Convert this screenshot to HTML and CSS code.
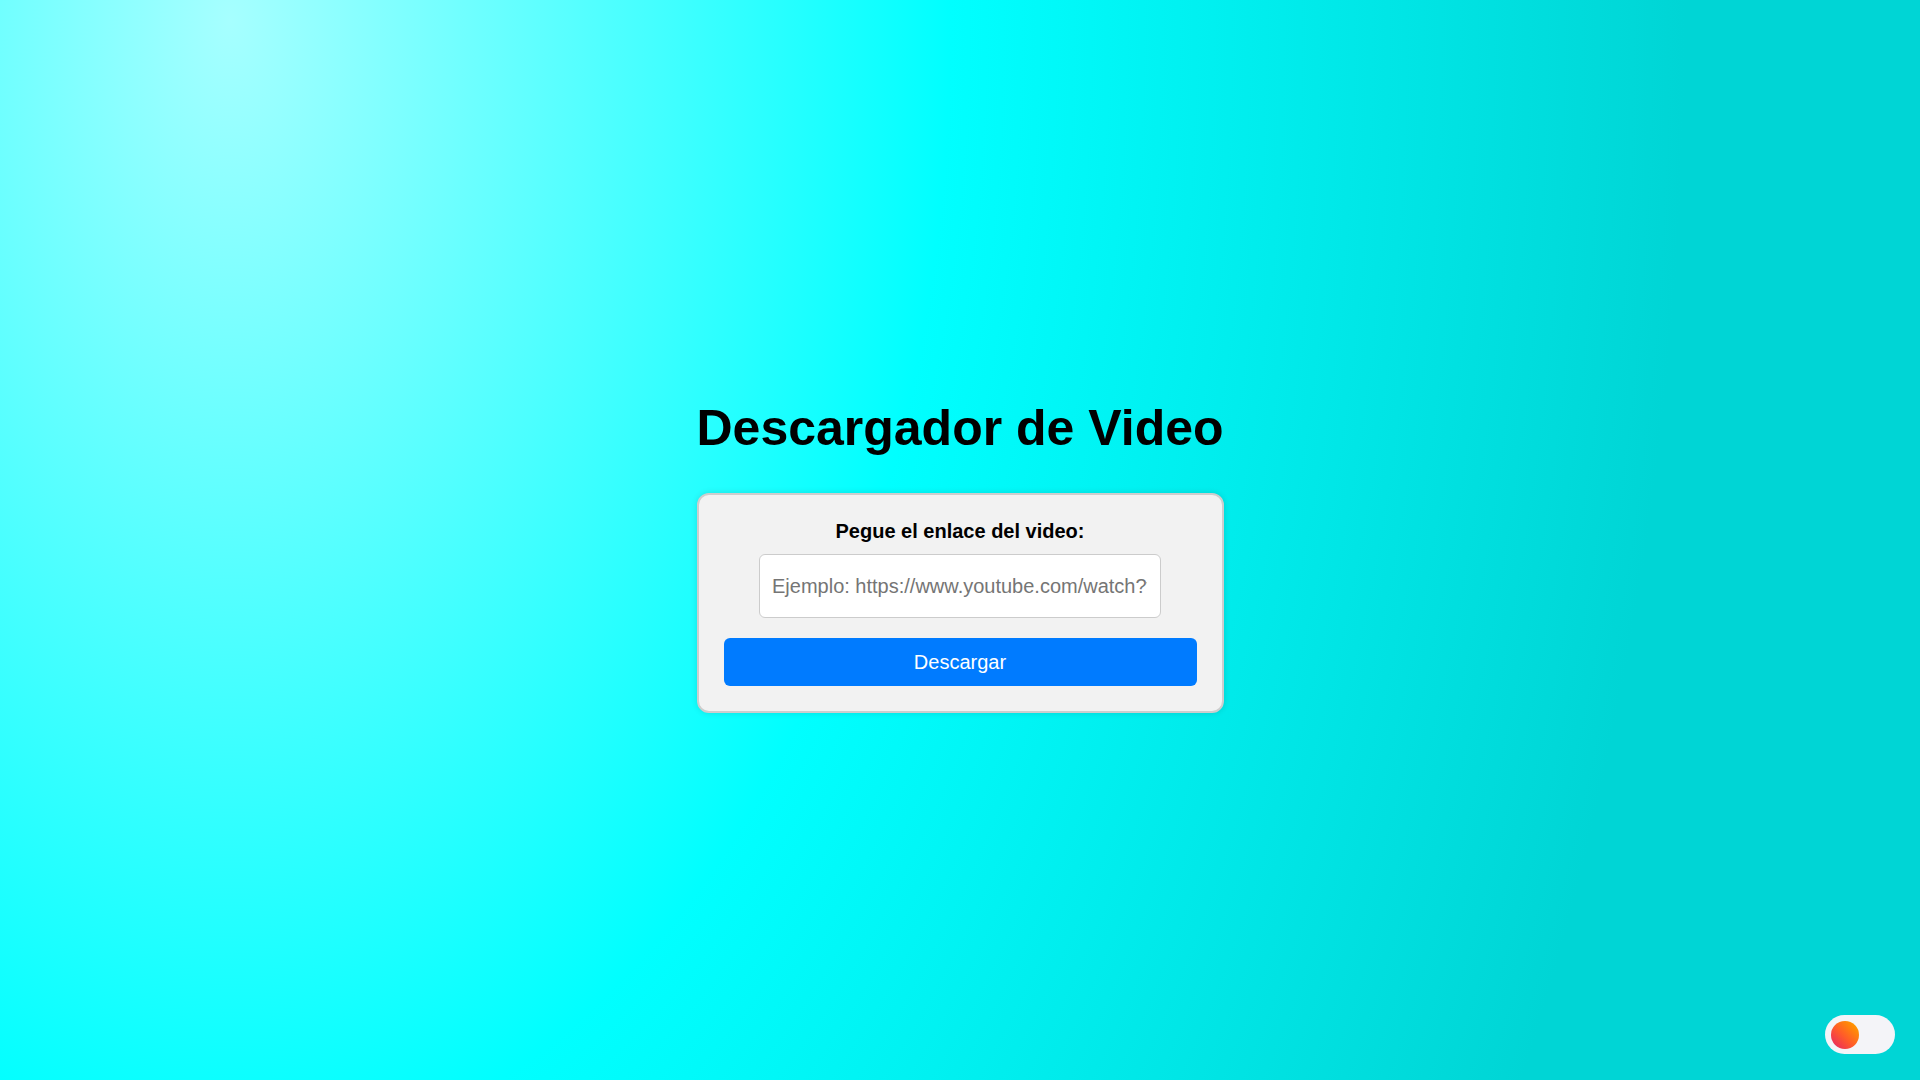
FILE: index.html
```html
<!DOCTYPE html>
<html lang="es">
<head>
<meta charset="utf-8">
<title>Descargador de Video</title>
<link rel="stylesheet" href="styles.css">
</head>
<body>
<main class="page">
  <h1 class="title">Descargador de Video</h1>
  <form class="card" onsubmit="return false;">
    <label class="label" for="url">Pegue el enlace del video:</label>
    <input class="url-input" id="url" type="text" placeholder="Ejemplo: https://www.youtube.com/watch?v=xxxxxxxx">
    <button class="btn" type="submit">Descargar</button>
  </form>
</main>
<div class="toggle"><span class="knob"></span></div>
</body>
</html>
```
FILE: styles.css
```css
html, body {
  margin: 0;
  padding: 0;
  height: 100%;
}
body {
  font-family: "Liberation Sans", Arial, sans-serif;
  background: radial-gradient(ellipse 1500px 2380px at 230px 20px, #a6ffff 0%, #00ffff 48%, #00d5d5 97%);
  background-color: #00d5d5;
  overflow: hidden;
}
.page {
  height: 100vh;
  display: flex;
  flex-direction: column;
  align-items: center;
  justify-content: center;
}
.title {
  font-size: 50px;
  font-weight: bold;
  line-height: 57px;
  color: #000;
  margin: 32.5px 0 36.5px;
}
.card {
  box-sizing: border-box;
  width: 527px;
  padding: 25px;
  background: #f2f2f2;
  border: 2px solid #cdcdcd;
  border-radius: 12px;
  box-shadow: 0 0 6px rgba(0, 0, 0, 0.12);
  display: flex;
  flex-direction: column;
  align-items: center;
}
.label {
  font-size: 20px;
  font-weight: bold;
  line-height: 22px;
  color: #000;
  margin-bottom: 12px;
}
.url-input {
  box-sizing: border-box;
  width: 402px;
  height: 64px;
  padding: 0 13px 0 12px;
  font-family: "Liberation Sans", Arial, sans-serif;
  font-size: 20px;
  color: #000;
  background: #fff;
  border: 1px solid #cccccc;
  border-radius: 6px;
  outline: none;
  margin: 0 0 20px;
}
.url-input::placeholder {
  color: #757575;
}
.btn {
  box-sizing: border-box;
  width: 100%;
  height: 48px;
  font-family: "Liberation Sans", Arial, sans-serif;
  font-size: 20px;
  color: #fff;
  background: #007bff;
  border: none;
  border-radius: 6px;
  cursor: pointer;
}
.toggle {
  position: fixed;
  right: 25px;
  bottom: 26px;
  width: 70px;
  height: 39px;
  border-radius: 20px;
  background: #f4f4f8;
  display: flex;
  align-items: center;
  padding-left: 6px;
  box-sizing: border-box;
}
.knob {
  width: 28px;
  height: 28px;
  border-radius: 50%;
  background: linear-gradient(45deg, #e4206c 0%, #ff5a2a 45%, #ff9400 85%);
}
```
